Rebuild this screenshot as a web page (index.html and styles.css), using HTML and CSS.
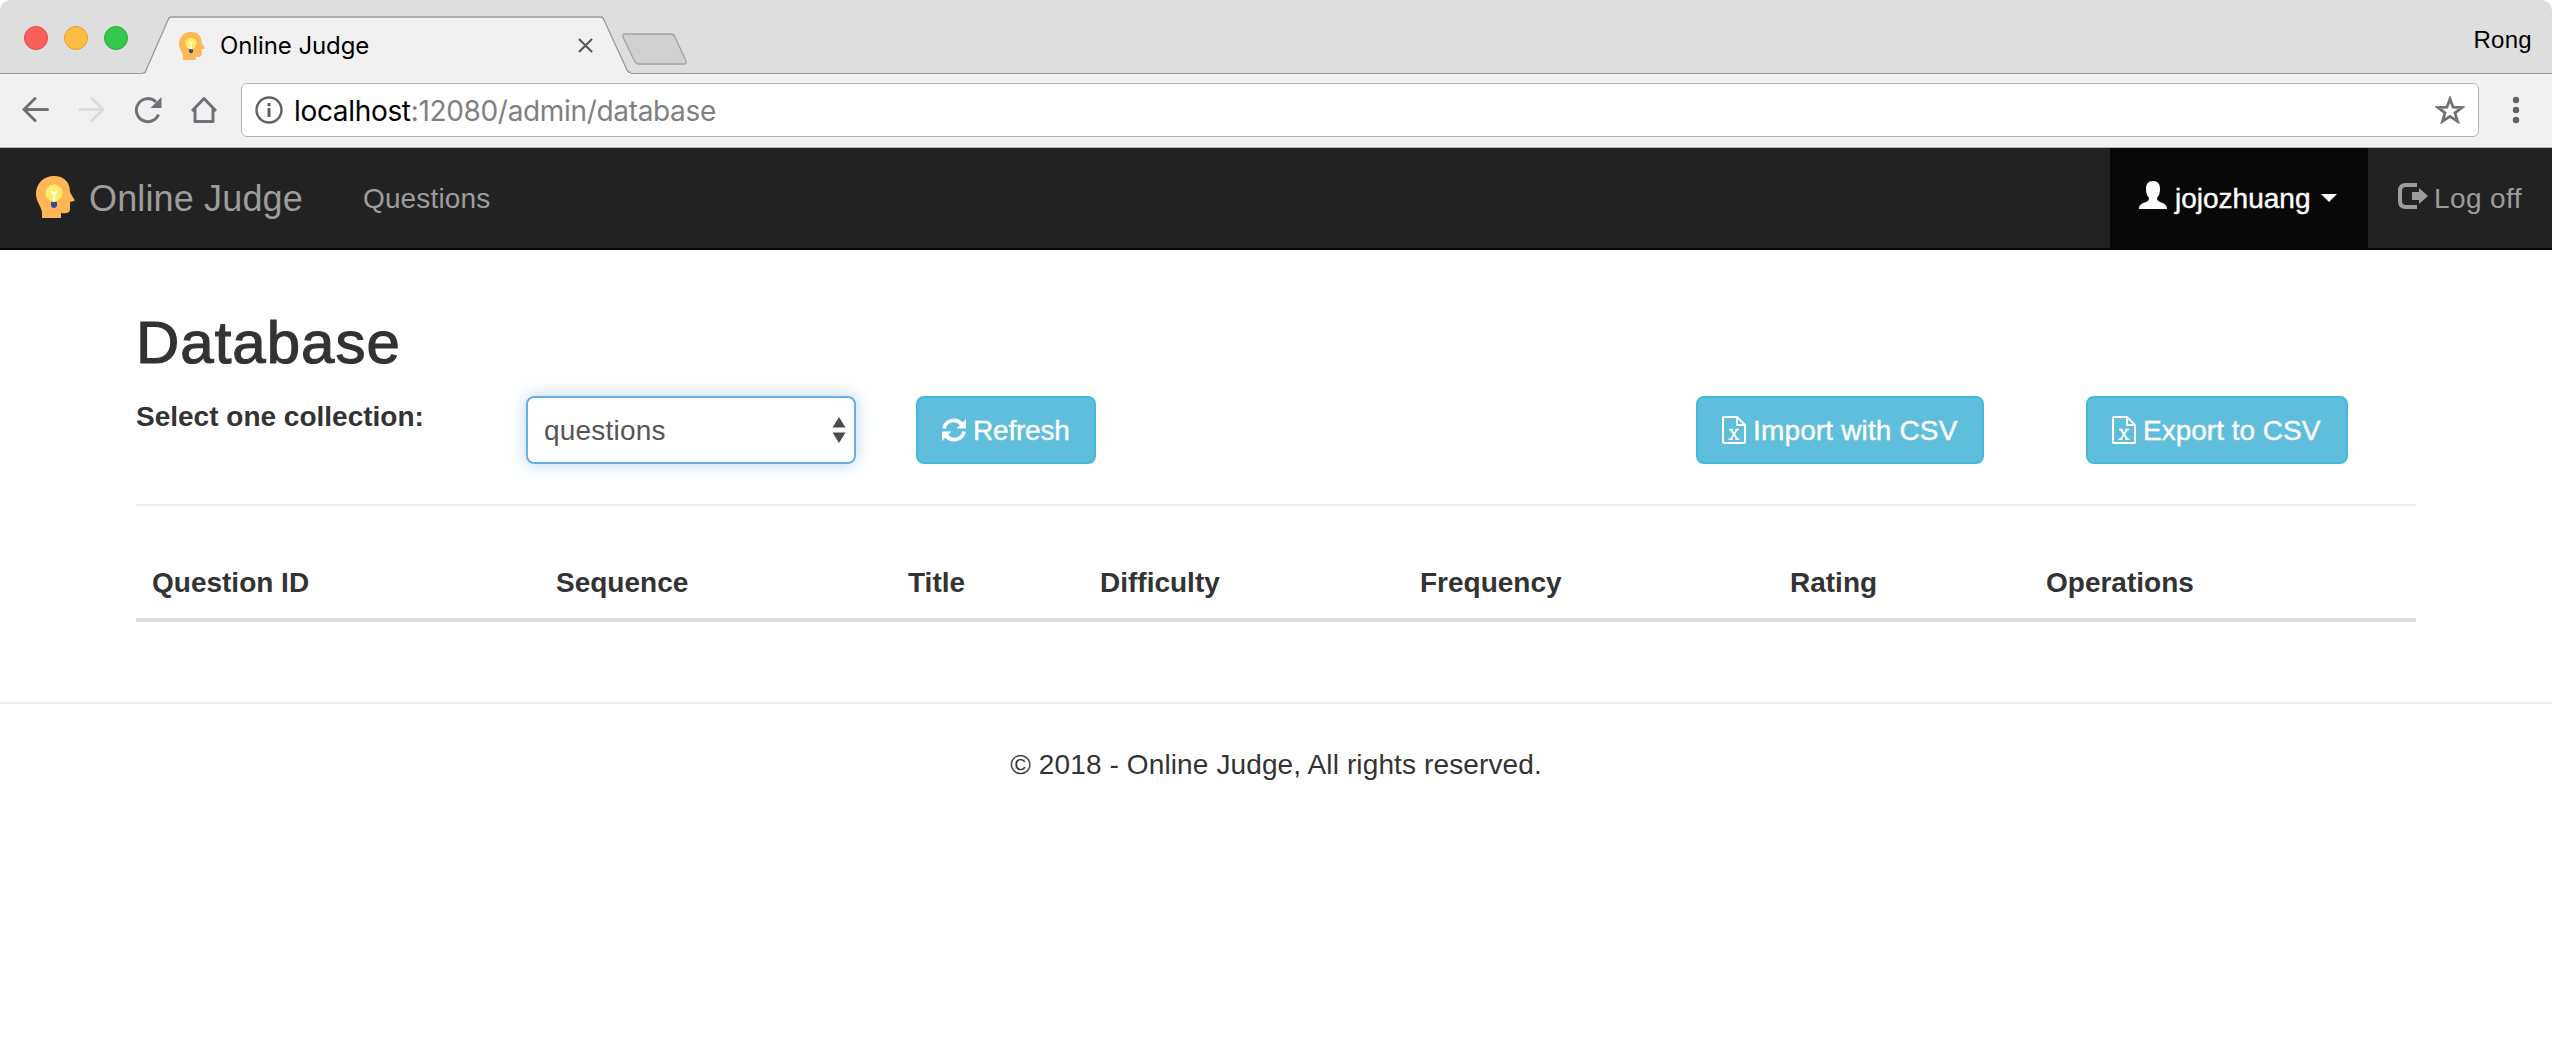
FILE: index.html
```html
<!DOCTYPE html>
<html lang="en">
<head>
<meta charset="utf-8">
<title>Online Judge</title>
<link rel="stylesheet" href="styles.css">
</head>
<body>
<svg class="defs" aria-hidden="true">
  <symbol id="head" viewBox="0 0 39 42">
    <path fill="#ffb655" d="M18 0C7 0 0 8 0 18c0 8 6 13 6 19v5h19v-5c5 1 9 0 9-4v-7l4-1c1 0 1-1 0-2l-4-7C34 7 29 0 18 0z"/>
    <circle cx="18" cy="17" r="8.5" fill="#ffed64"/>
    <path fill="none" stroke="#fff" stroke-width="1.8" d="M15 15l3 3 3-3M18 17v9"/>
    <path fill="#2f4ba5" d="M15 26h6v4l-2 2h-2l-2-2z"/>
  </symbol>
  <symbol id="excel" viewBox="0 0 24 28">
    <path fill="none" stroke="#fff" stroke-width="2" stroke-linejoin="round" d="M15 1H2q-1 0-1 1v24q0 1 1 1h20q1 0 1-1V9zM15 1v8h8"/>
    <path fill="none" stroke="#fff" stroke-width="2.2" d="M9 13.500l6 9.500"/>
    <path fill="none" stroke="#fff" stroke-width="1.500" d="M15 13.500L9 23M7 13.500h3.800M13.200 13.500h3.800M6.500 23.300h4M13.500 23.300h4"/>
  </symbol>
</svg>
<div class="window">
  <div class="tabstrip">
    <div class="lights"><i class="red"></i><i class="yellow"></i><i class="green"></i></div>
    <div class="tab">
      <svg class="tab-shape" viewBox="0 0 488 58"><path d="M0 57.500L2 57 25 4Q26 1 28 1H458Q460 1 461 4L484 54Q485 57 488 57.500V60H0z" fill="#f1f1f1"/><path d="M0 56.500H2L25 4Q26 1 28 1H458Q460 1 461 4L484 54Q485 56.500 488 56.500" fill="none" stroke="#9a9a9a" stroke-width="1.300"/></svg>
      <svg class="favicon"><use href="#head"/></svg>
      <span class="tab-title">Online Judge</span>
      <svg class="close" viewBox="0 0 16 16"><path d="M1 1l14 14M15 1L1 15" stroke="#5a5a5a" stroke-width="2.300"/></svg>
    </div>
    <svg class="newtab" viewBox="0 0 66 34"><path d="M3 1H49Q52 1 53 4L64 28Q65 31 62 31H17Q14 31 12.500 28L1 4Q0 1 3 1z" fill="#d0d0d0" stroke="#a2a2a2" stroke-width="1.300"/></svg>
    <span class="profile">Rong</span>
  </div>
  <div class="toolbar">
    <svg class="tool" viewBox="0 0 28 28"><path d="M25.500 13.500H3M13 2.500L2 13.500l11 11" fill="none" stroke="#6e7278" stroke-width="3" stroke-linecap="round"/></svg>
    <svg class="tool" viewBox="0 0 28 28"><path d="M2 13.500H25M14 2.500l11 11-11 11" fill="none" stroke="#d8dadb" stroke-width="3" stroke-linecap="round"/></svg>
    <svg class="tool" viewBox="0 0 28 28"><path d="M24.500 18.500A11.500 11.500 0 1 1 22 6" fill="none" stroke="#6e7278" stroke-width="3"/><path d="M27.500 1v11h-11z" fill="#6e7278"/></svg>
    <svg class="tool" viewBox="0 0 28 28"><path d="M2 15L14 2.500 26 15M5 13v12.500h18V13" fill="none" stroke="#6e7278" stroke-width="3" stroke-linejoin="round"/></svg>
    <div class="address">
      <svg class="info" viewBox="0 0 28 28"><circle cx="14" cy="14" r="12.500" fill="none" stroke="#5f6368" stroke-width="2.400"/><path d="M14 7v3.300M14 12v9" stroke="#5f6368" stroke-width="3"/></svg>
      <span class="url">localhost<span>:12080/admin/database</span></span>
      <svg class="star" viewBox="0 0 30 28"><path d="M15 3l3.100 8.200 8.900.3-7 5.300 2.500 8.500-7.500-4.900-7.500 4.900L10 16.800l-7-5.300 8.900-.3z" fill="none" stroke="#6e7278" stroke-width="2.800"/></svg>
    </div>
    <svg class="menu" viewBox="0 0 8 28"><g fill="#5f6368"><circle cx="4" cy="4" r="3.200"/><circle cx="4" cy="14" r="3.200"/><circle cx="4" cy="24" r="3.200"/></g></svg>
  </div>
  <nav class="navbar">
    <a class="brand"><svg><use href="#head"/></svg><span>Online Judge</span></a>
    <a class="questions">Questions</a>
    <a class="user"><svg class="person" viewBox="0 0 28 28"><path fill="#fff" d="M14 0c5 0 7 3 7 8 0 4-1 7-3 9 0 2 1 3 3 4 4 1 7 3 7 7H0c0-4 3-6 7-7 2-1 3-2 3-4-2-2-3-5-3-9 0-5 2-8 7-8z"/></svg><span>jojozhuang</span><i class="caret"></i></a>
    <a class="logoff"><svg class="exit" viewBox="0 0 30 26"><path d="M19 2H8Q2 2 2 8v10q0 6 6 6h11" fill="none" stroke="#9d9d9d" stroke-width="4"/><path d="M14 9h7V5l9 8-9 8v-4h-7z" fill="#9d9d9d"/></svg><span>Log off</span></a>
  </nav>
  <main class="container">
    <h1>Database</h1>
    <div class="controls">
      <label>Select one collection:</label>
      <div class="select"><span>questions</span><svg viewBox="0 0 14 26"><path d="M7 0l6.500 10.500H.5zM7 26L.5 15.500h13z" fill="#4c4c4c"/></svg></div>
      <button class="btn refresh"><svg class="sync" viewBox="0 0 24 24"><path d="M2 10.500A10 10 0 0 1 19.500 6M22 13.500A10 10 0 0 1 4.500 18" fill="none" stroke="#fff" stroke-width="3.800"/><path d="M24 1v9.500h-9.500zM0 23v-9.500h9.500z" fill="#fff"/></svg><span>Refresh</span></button>
      <button class="btn import"><svg class="file"><use href="#excel"/></svg><span>Import with CSV</span></button>
      <button class="btn export"><svg class="file"><use href="#excel"/></svg><span>Export to CSV</span></button>
    </div>
    <hr>
    <div class="thead"><b>Question ID</b><b>Sequence</b><b>Title</b><b>Difficulty</b><b>Frequency</b><b>Rating</b><b>Operations</b></div>
  </main>
  <footer>© 2018 - Online Judge, All rights reserved.</footer>
</div>
</body>
</html>
```
FILE: styles.css
```css
* { box-sizing: border-box; }
body { margin: 0; background: #fff; color: #333; font: 28px/40px "Liberation Sans", Arial, sans-serif; }
svg { display: block; flex: none; }
.defs { position: absolute; width: 0; height: 0; }
.window { height: 1064px; overflow: hidden; border-radius: 10px 10px 0 0; }

.tabstrip { display: flex; height: 74px; background: #dedede; border-bottom: 1px solid #9a9a9a; border-radius: 10px 10px 0 0; }
.lights { display: flex; gap: 16px; padding: 26px 0 0 24px; width: 143px; }
.lights i { width: 24px; height: 24px; border-radius: 50%; border: 1px solid; }
.lights .red { background: #fc605c; border-color: #df4744; }
.lights .yellow { background: #fdbc40; border-color: #de9f34; }
.lights .green { background: #34c84a; border-color: #27aa35; }
.tab { position: relative; display: flex; width: 488px; height: 58px; margin-top: 16px; padding-left: 36px; }
.tab-shape { position: absolute; left: 0; top: 0; width: 488px; height: 58px; }
.favicon { position: relative; width: 26px; height: 28px; margin-top: 16px; }
.tab-title { position: relative; margin: 10px 0 0 15px; font: 24px/40px Inter, sans-serif; letter-spacing: -.1px; color: #000; width: 150px; white-space: nowrap; }
.close { position: relative; width: 15px; height: 15px; margin: 22px 0 0 208px; }
.newtab { width: 66px; height: 34px; margin: 33px 0 0 -9px; }
.profile { margin: 20px 20px 0 auto; font-size: 24px; letter-spacing: .3px; color: #000; }

.toolbar { display: flex; align-items: center; height: 74px; padding: 0 32px 2px 22px; background: #f1f1f1; border-bottom: 1px solid #b3b3b3; }
.tool { width: 28px; height: 28px; margin-right: 28px; }
.tool:nth-of-type(4) { margin-right: 23px; }
.address { display: flex; flex: 1; align-items: center; height: 54px; padding: 0 13px; background: #fff; border: 1px solid #b4b4b4; border-radius: 6px; }
.info { width: 28px; height: 28px; }
.url { flex: 1; margin: 2px 0 0 11px; font: 28px/40px Inter, sans-serif; letter-spacing: -.33px; color: #000; }
.url span { color: #808080; }
.star { width: 30px; height: 28px; }
.menu { width: 8px; height: 28px; margin-left: 33px; }

.navbar { display: flex; height: 102px; background: #222; border-bottom: 2px solid #080808; color: #9d9d9d; }
.navbar a { display: flex; align-items: center; }
.navbar span, .questions { padding-top: 1px; }
.brand { margin-left: 36px; font-size: 36px; letter-spacing: .15px; }
.brand svg { width: 39px; height: 42px; margin: -2px 14px 0 0; }
.questions { margin-left: 60px; letter-spacing: .15px; }
.user { width: 258px; margin-left: auto; padding-left: 29px; background: #080808; color: #fff; -webkit-text-stroke: .4px; }
.person { width: 28px; height: 28px; margin: -6px 8px 0 0; }
.caret { margin-left: 11px; border: 8px solid transparent; border-top-color: #fff; border-bottom: 0; }
.logoff { width: 184px; padding-left: 30px; letter-spacing: .4px; }
.exit { width: 30px; height: 26px; margin: -4px 6px 0 0; }

.container { width: 2280px; margin: 0 auto; padding-top: 60px; }
h1 { margin: 0; font-size: 60px; line-height: 66px; font-weight: 400; -webkit-text-stroke: 1.200px #333; letter-spacing: 1px; }
.controls { display: flex; margin-top: 20px; height: 68px; }
label { width: 390px; padding-top: 1px; font-weight: 700; }
.select { display: flex; align-items: center; justify-content: space-between; width: 330px; height: 68px; padding: 0 8px 0 16px; border: 2px solid #66afe9; border-radius: 8px; color: #555; letter-spacing: .2px; box-shadow: 0 0 16px rgba(102,175,233,.5); }
.select svg { width: 14px; height: 26px; }
.select span, .btn span { padding-top: 1px; }
.btn { display: flex; align-items: center; height: 68px; padding: 0 24px; border: 2px solid #46b8da; border-radius: 8px; background: #5fbedb; color: #fff; font: inherit; white-space: nowrap; -webkit-text-stroke: .4px; }
.refresh { width: 180px; margin-left: 60px; letter-spacing: -.2px; }
.import { width: 288px; margin-left: 600px; letter-spacing: .15px; }
.export { width: 262px; margin-left: 102px; }
.sync { width: 24px; height: 24px; margin-right: 7px; }
.file { width: 24px; height: 28px; margin-right: 7px; }
hr { margin: 40px 0 0; border: 0; height: 2px; background: #eee; }
.thead { display: grid; grid-template-columns: 404px 352px 192px 320px 370px 256px 386px; margin-top: 40px; height: 76px; padding-top: 17px; border-bottom: 4px solid #ddd; }
.thead b { padding-left: 16px; }
footer { margin-top: 80px; padding-top: 41px; border-top: 2px solid #eee; text-align: center; letter-spacing: .12px; }
```
